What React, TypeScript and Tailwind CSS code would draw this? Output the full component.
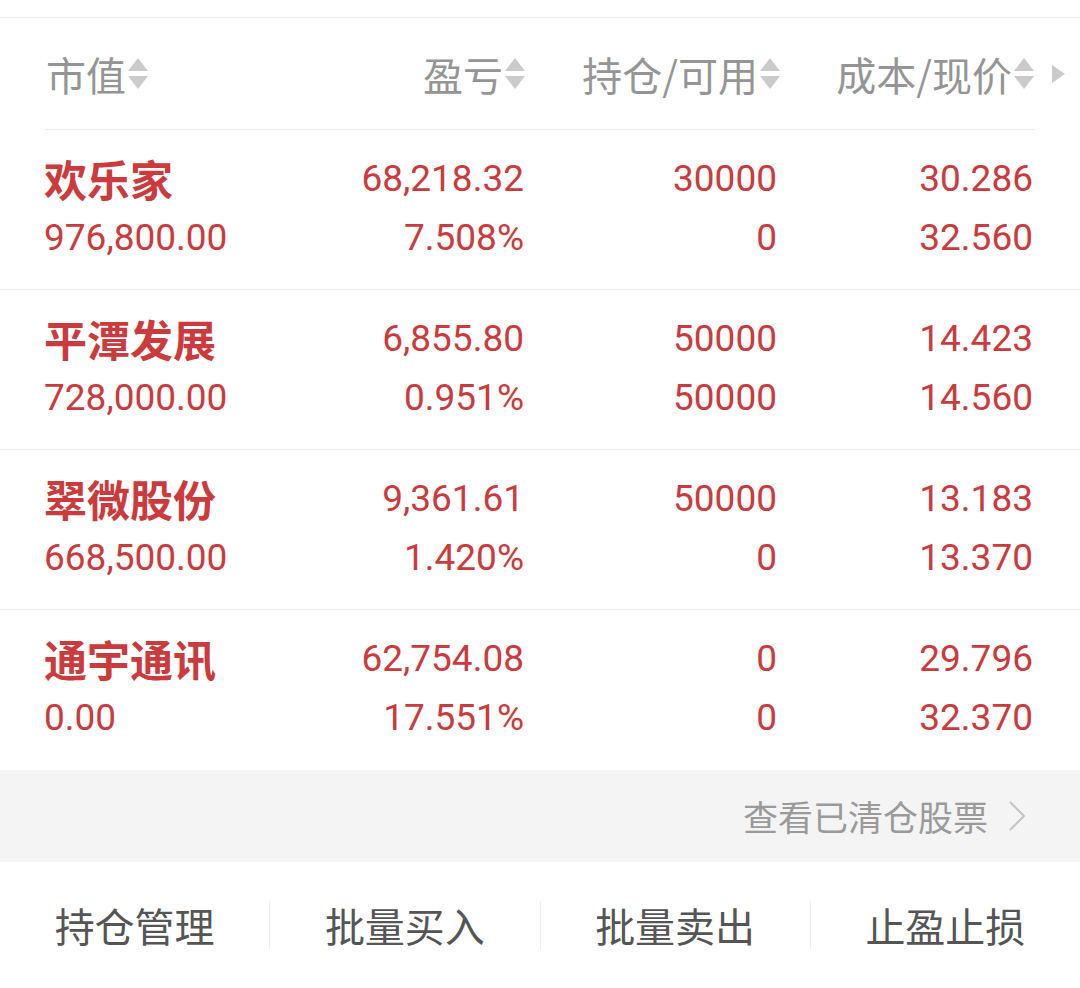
const CJK = "font-['Noto_Sans_CJK_SC',sans-serif]"

const rows = [
  { name: "欢乐家", value: "976,800.00", pnl: "68,218.32", pct: "7.508%", hold: "30000", avail: "0", cost: "30.286", price: "32.560" },
  { name: "平潭发展", value: "728,000.00", pnl: "6,855.80", pct: "0.951%", hold: "50000", avail: "50000", cost: "14.423", price: "14.560" },
  { name: "翠微股份", value: "668,500.00", pnl: "9,361.61", pct: "1.420%", hold: "50000", avail: "0", cost: "13.183", price: "13.370" },
  { name: "通宇通讯", value: "0.00", pnl: "62,754.08", pct: "17.551%", hold: "0", avail: "0", cost: "29.796", price: "32.370" },
]

function SortIcon() {
  return (
    <svg width="20" height="32" viewBox="0 0 20 32" className="ml-[2px] shrink-0">
      <polygon points="10,0 20,13 0,13" fill="#cbcbcb" />
      <polygon points="0,18 20,18 10,31" fill="#cbcbcb" />
    </svg>
  )
}

function Head({ label, right }: { label: string; right?: boolean }) {
  return (
    <div className={`flex items-center ${right ? "justify-end" : ""}`}>
      <span>{label}</span>
      <SortIcon />
    </div>
  )
}

export default function App() {
  return (
    <div className={`w-[1080px] h-[988px] bg-white flex flex-col ${CJK}`}>
      <div className="h-[18px] border-b border-[#eeeeee] shrink-0" />

      {/* header */}
      <div className="flex h-[111px] items-center pl-[46px] text-[40px] text-[#959595] shrink-0">
        <div className="w-[248px]"><Head label="市值" /></div>
        <div className="w-[231px]"><Head label="盈亏" right /></div>
        <div className="w-[255px]"><Head label="持仓/可用" right /></div>
        <div className="w-[254px]"><Head label="成本/现价" right /></div>
        <svg width="14" height="20" viewBox="0 0 14 20" className="ml-[18px]">
          <polygon points="0,1 13,10 0,19" fill="#cbcbcb" />
        </svg>
      </div>
      <div className="mx-[45px] border-b border-[#eeeeee]" />

      {rows.map((r, i) => (
        <div key={r.name} className={`flex h-[160px] pt-[19px] pl-[44px] text-[#cb3a3c] leading-[59px] shrink-0 ${i < 3 ? "border-b border-[#eeeeee]" : ""}`}>
          <div className="w-[250px]">
            <div className="text-[43px] font-bold">{r.name}</div>
            <div className="text-[37px] font-['Roboto',sans-serif]">{r.value}</div>
          </div>
          <div className="w-[230px] text-right text-[37px] font-['Roboto',sans-serif]">
            <div>{r.pnl}</div>
            <div>{r.pct}</div>
          </div>
          <div className="w-[253px] text-right text-[37px] font-['Roboto',sans-serif]">
            <div>{r.hold}</div>
            <div>{r.avail}</div>
          </div>
          <div className="w-[256px] text-right text-[37px] font-['Roboto',sans-serif]">
            <div>{r.cost}</div>
            <div>{r.price}</div>
          </div>
        </div>
      ))}

      {/* cleared stocks link */}
      <div className="h-[92px] bg-[#f4f4f4] flex items-center justify-end pr-[54px] text-[35px] text-[#9a9a9a] shrink-0">
        <span>查看已清仓股票</span>
        <svg width="18" height="32" viewBox="0 0 18 32" className="ml-[20px]">
          <polyline points="2,2 16,16 2,30" fill="none" stroke="#c4c4c4" strokeWidth="2" />
        </svg>
      </div>

      {/* bottom actions */}
      <div className="flex-1 flex items-center text-[40px] text-[#555555]">
        {["持仓管理", "批量买入", "批量卖出", "止盈止损"].map((t, i) => (
          <div key={t} className={`flex-1 flex items-center justify-center h-[48px] ${i < 3 ? "border-r border-[#eeeeee]" : ""}`}>
            {t}
          </div>
        ))}
      </div>
    </div>
  )
}
